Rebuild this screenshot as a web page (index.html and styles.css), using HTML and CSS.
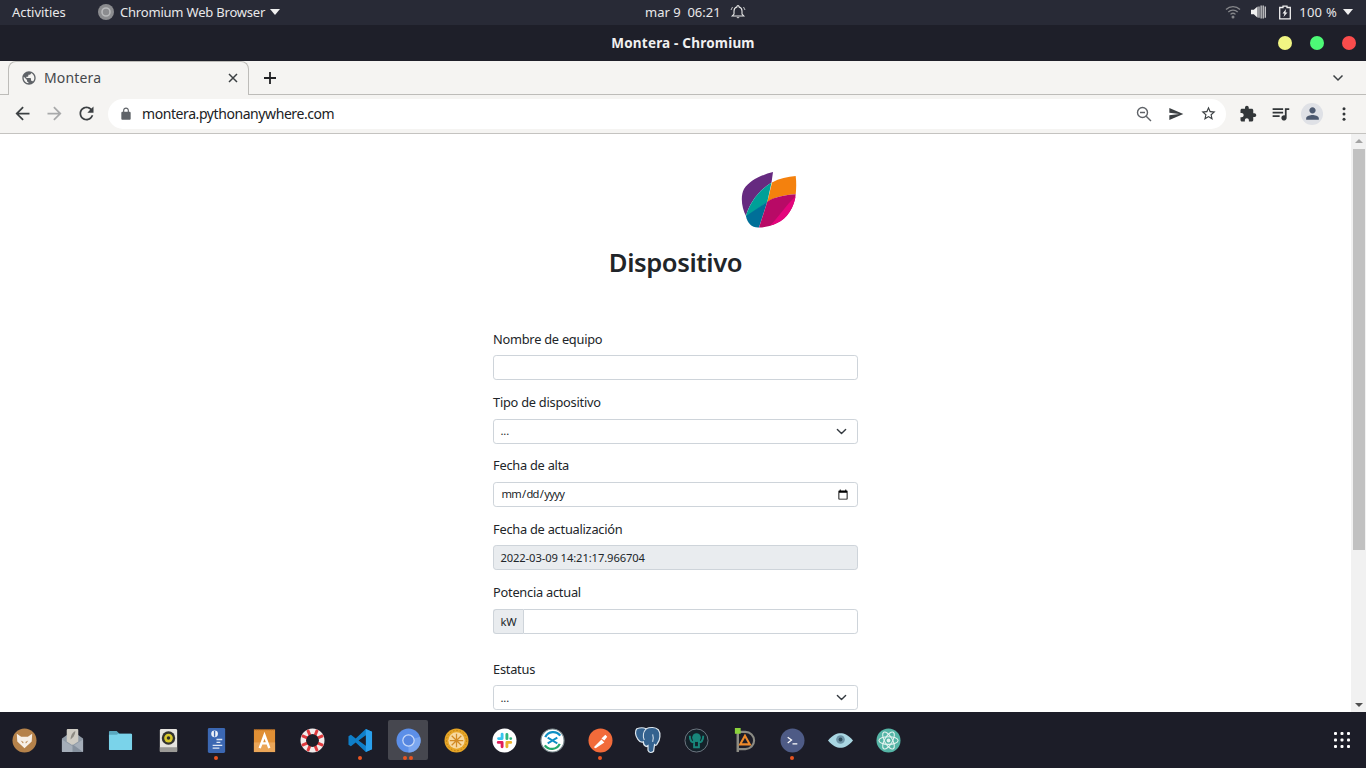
FILE: index.html
```html
<!DOCTYPE html>
<html lang="es">
<head>
<meta charset="utf-8">
<title>Montera - Chromium</title>
<link rel="stylesheet" href="styles.css">
</head>
<body>
<div class="desktop">
  <header class="topbar">
    <div class="tb-left">
      <span class="activities">Activities</span>
      <span class="appmenu">
        <svg class="app-ico" viewBox="0 0 16 16"><circle cx="8" cy="8" r="8" fill="#8b8c8f"/><circle cx="8" cy="8" r="4" fill="none" stroke="#b9babc" stroke-width="1.6"/></svg>
        <span class="appname">Chromium Web Browser</span>
        <i class="caret"></i>
      </span>
    </div>
    <div class="tb-center">
      <span class="clock">mar 9&nbsp;&nbsp;06:21</span>
      <svg class="bell" viewBox="0 0 16 16"><path d="M8 1.5c-.6 0-1 .4-1 1v.4C5 3.500 4 5 4 7v3l-1.800 2h11.600L12 10V7c0-2-1-3.500-3-4.100v-.4c0-.6-.4-1-1-1z" fill="none" stroke="#e8e8e8" stroke-width="1.100"/><path d="M6.500 13.300a1.600 1.600 0 0 0 3 0z" fill="#e8e8e8"/><path d="M2.500 3 1 6M13.500 3 15 6" stroke="#e8e8e8" stroke-width="0.800" fill="none"/></svg>
    </div>
    <div class="tb-right">
      <svg class="sys wifi" viewBox="0 0 16 16"><path d="M1 5.500a10 10 0 0 1 14 0M3.300 8a6.800 6.800 0 0 1 9.400 0M5.500 10.400a3.600 3.600 0 0 1 5 0" fill="none" stroke="#85868a" stroke-width="1.300"/><circle cx="8" cy="13" r="1.500" fill="#85868a"/></svg>
      <svg class="sys vol" viewBox="0 0 16 14"><path d="M0 4.500h3L7 1v12L3 9.500H0z" fill="#f0f0f0"/><path d="M8.500 1v12M10.800 0v14M13 0v14M15.200 1v12" stroke="#e4e4e4" stroke-width="1.200"/></svg>
      <svg class="sys batt" viewBox="0 0 12 14"><path d="M4 .7h4v1.300h3.300v11.300H.7V2H4z" fill="none" stroke="#f0f0f0" stroke-width="1.300"/><path d="M7 3.500 3.500 8h2l-1 3.500L8.500 7h-2z" fill="#f0f0f0"/></svg>
      <span class="pct">100 %</span>
      <i class="caret"></i>
    </div>
  </header>

  <div class="titlebar">
    <span></span>
    <strong class="wintitle">Montera - Chromium</strong>
    <div class="wbtns">
      <i class="wbtn min"></i><i class="wbtn max"></i><i class="wbtn cls"></i>
    </div>
  </div>

  <div class="tabstrip">
    <div class="tab">
      <svg class="fav" viewBox="0 0 24 24"><path d="M12 2C6.480 2 2 6.480 2 12s4.480 10 10 10 10-4.480 10-10S17.520 2 12 2zm-1 17.930c-3.950-.490-7-3.850-7-7.930 0-.620.080-1.210.210-1.790L9 15v1c0 1.100.9 2 2 2v1.930zm6.900-2.540c-.260-.810-1-1.390-1.900-1.390h-1v-3c0-.550-.450-1-1-1H8v-2h2c.550 0 1-.450 1-1V7h2c1.100 0 2-.9 2-2v-.410c2.930 1.190 5 4.060 5 7.410 0 2.080-.8 3.970-2.100 5.390z"/></svg>
      <span class="tabname">Montera</span>
      <svg class="tabx" viewBox="0 0 10 10"><path d="M1 1l8 8M9 1l-8 8" stroke="#3c4043" stroke-width="1.500" fill="none"/></svg>
    </div>
    <svg class="newtab" viewBox="0 0 14 14"><path d="M7 1v12M1 7h12" stroke="#202124" stroke-width="1.800" fill="none"/></svg>
    <svg class="tabdown" viewBox="0 0 12 8"><path d="M1.500 1.500 6 6l4.500-4.500" stroke="#3c4043" stroke-width="1.500" fill="none"/></svg>
  </div>

  <div class="toolbar">
    <span class="tbtn"><svg class="ic nav" viewBox="0 0 24 24"><path d="M20 11H7.830l5.590-5.590L12 4l-8 8 8 8 1.410-1.410L7.830 13H20v-2z"/></svg></span>
    <span class="tbtn off"><svg class="ic nav" viewBox="0 0 24 24"><path d="M12 4l-1.410 1.410L16.170 11H4v2h12.170l-5.580 5.590L12 20l8-8z"/></svg></span>
    <span class="tbtn"><svg class="ic nav" viewBox="0 0 24 24"><path d="M17.650 6.350C16.200 4.900 14.210 4 12 4c-4.420 0-7.990 3.580-7.990 8s3.570 8 7.990 8c3.730 0 6.840-2.550 7.730-6h-2.080c-.820 2.330-3.040 4-5.650 4-3.310 0-6-2.690-6-6s2.690-6 6-6c1.660 0 3.140.690 4.220 1.780L13 11h7V4l-2.350 2.350z"/></svg></span>
    <div class="omni">
      <svg class="lock" viewBox="0 0 24 24"><path d="M18 8h-1V6c0-2.760-2.240-5-5-5S7 3.240 7 6v2H6c-1.100 0-2 .9-2 2v10c0 1.100.9 2 2 2h12c1.100 0 2-.9 2-2V10c0-1.100-.9-2-2-2zM9 6c0-1.660 1.340-3 3-3s3 1.340 3 3v2H9V6z"/></svg>
      <span class="url">montera.pythonanywhere.com</span>
      <span class="tbtn"><svg class="ic s16" viewBox="0 0 16 16"><circle cx="6.500" cy="6.500" r="5" fill="none" stroke="#5f6368" stroke-width="1.400"/><path d="M4 6.500h5M10.200 10.200 15 15" stroke="#5f6368" stroke-width="1.400" fill="none"/></svg></span>
      <span class="tbtn"><svg class="ic send" viewBox="0 0 24 24"><path d="M2.010 21L23 12 2.010 3 2 10l15 2-15 2z" fill="#3c4043"/></svg></span>
      <span class="tbtn"><svg class="ic star" viewBox="0 0 24 24"><path d="M22 9.240l-7.190-.620L12 2 9.190 8.630 2 9.240l5.460 4.730L5.820 21 12 17.270 18.180 21l-1.630-7.030L22 9.240zM12 15.400l-3.760 2.270 1-4.280-3.320-2.880 4.380-.380L12 6.100l1.710 4.040 4.380.380-3.320 2.880 1 4.280L12 15.400z"/></svg></span>
    </div>
    <span class="tbtn"><svg class="ic" viewBox="0 0 24 24"><path d="M20.500 11H19V7c0-1.100-.9-2-2-2h-4V3.500C13 2.120 11.880 1 10.500 1S8 2.120 8 3.500V5H4c-1.100 0-1.990.9-1.990 2v3.800H3.500c1.490 0 2.700 1.210 2.700 2.700s-1.210 2.700-2.700 2.700H2V20c0 1.100.9 2 2 2h3.800v-1.500c0-1.490 1.210-2.700 2.700-2.700 1.490 0 2.700 1.210 2.700 2.700V22H17c1.100 0 2-.9 2-2v-4h1.500c1.380 0 2.500-1.120 2.500-2.500S21.880 11 20.500 11z" fill="#323639"/></svg></span>
    <span class="tbtn"><svg class="ic nav" viewBox="0 0 24 24"><path d="M15 6H3v2h12V6zm0 4H3v2h12v-2zM3 16h8v-2H3v2zM17 6v8.180c-.310-.110-.650-.180-1-.180-1.660 0-3 1.340-3 3s1.340 3 3 3 3-1.340 3-3V8h3V6h-5z" fill="#323639"/></svg></span>
    <span class="tbtn"><span class="avatar"><svg class="ic face" viewBox="0 0 24 24"><path d="M12 12c2.210 0 4-1.790 4-4s-1.790-4-4-4-4 1.790-4 4 1.790 4 4 4zm0 2c-2.670 0-8 1.340-8 4v2h16v-2c0-2.660-5.330-4-8-4z" fill="#4d5a70"/></svg></span></span>
    <span class="tbtn"><svg class="ic" viewBox="0 0 24 24"><circle cx="12" cy="5" r="2" fill="#323639"/><circle cx="12" cy="12" r="2" fill="#323639"/><circle cx="12" cy="19" r="2" fill="#323639"/></svg></span>
  </div>

  <div class="viewport">
    <main class="page">
      <div class="column">
        <svg class="logo" viewBox="0 0 56 57">
          <path d="M32 0C20 3 8 9 3 17-1 25 1 36 5 44 8 32 17 19 30.500 10.500z" fill="#662a80"/>
          <path d="M5 44C8 32 17 19 30.500 10.500L26.300 30 5.500 45z" fill="#00a098"/>
          <path d="M5 44 26.300 29.700 18 55.500C11 56 6 51 5 44z" fill="#006f98"/>
          <path d="M31 10.500C38 6.500 47 4.500 54.700 4 55.500 10 55.300 17 54.700 22.300 44 23 33 25 26.300 30z" fill="#f4810d"/>
          <path d="M26.300 29.700C33 25 44 23 54.700 22.300 54 34 46 47 36 51 30 54 24 55.500 18 55.500z" fill="#b80a66"/>
          <path d="M54.500 24.500C53 35 46 47 36 51 33 52.500 31 53 29 53.500 37 46 45 33 54.500 24.500z" fill="#e4057c"/>
        </svg>
        <h1 class="heading">Dispositivo</h1>
        <form class="device-form">
          <div class="field">
            <label class="flabel" for="f1">Nombre de equipo</label>
            <input class="control" id="f1" type="text">
          </div>
          <div class="field">
            <label class="flabel" for="f2">Tipo de dispositivo</label>
            <div class="selectwrap">
              <select class="control selectbox" id="f2"><option>...</option></select>
              <svg class="chev" viewBox="0 0 16 16"><path d="M2 5l6 6 6-6" fill="none" stroke="#343a40" stroke-width="2" stroke-linecap="round" stroke-linejoin="round"/></svg>
            </div>
          </div>
          <div class="field">
            <label class="flabel" for="f3">Fecha de alta</label>
            <input class="control dateinput" id="f3" type="date">
          </div>
          <div class="field">
            <label class="flabel" for="f4">Fecha de actualización</label>
            <input class="control readonly" id="f4" type="text" value="2022-03-09 14:21:17.966704" readonly>
          </div>
          <div class="field group-field">
            <label class="flabel" for="f5">Potencia actual</label>
            <div class="inputgroup">
              <span class="addon">kW</span>
              <input class="control grouped" id="f5" type="text">
            </div>
          </div>
          <div class="field">
            <label class="flabel" for="f6">Estatus</label>
            <div class="selectwrap">
              <select class="control selectbox" id="f6"><option>...</option></select>
              <svg class="chev" viewBox="0 0 16 16"><path d="M2 5l6 6 6-6" fill="none" stroke="#343a40" stroke-width="2" stroke-linecap="round" stroke-linejoin="round"/></svg>
            </div>
          </div>
        </form>
      </div>
    </main>
    <aside class="scrollbar">
      <i class="arrow up"></i>
      <div class="track"><div class="thumb"></div></div>
      <i class="arrow down"></i>
    </aside>
  </div>

  <footer class="dock">
    <div class="dock-apps">
      <span class="app"><svg class="dicon" viewBox="0 0 26 26"><circle cx="13" cy="13" r="12.500" fill="#b5824a"/><path d="M5 6l4.500 3h7L21 6l-.5 8-7.500 7-7.500-7z" fill="#f6efe6"/><path d="M9 13l3 1.500-.5 1.500zM17 13l-3 1.500.5 1.500z" fill="#b5824a"/></svg></span>
      <span class="app"><svg class="dicon" viewBox="0 0 26 26"><path d="M2 11l11-8 11 8v13a1 1 0 0 1-1 1H3a1 1 0 0 1-1-1z" fill="#8f9aa6"/><path d="M8 1h10a1 1 0 0 1 1 1v12l-6 4-6-4V2a1 1 0 0 1 1-1z" fill="#cfccc4"/><path d="M16 3c-4 2-5 6-5 9l3-3c1-2 2-4 2-6z" fill="#8d8a83"/><path d="M2 12l11 7 11-7v13H2z" fill="#a5aeb9"/><path d="M13 17l11 8H13z" fill="#86919e"/></svg></span>
      <span class="app"><svg class="dicon" viewBox="0 0 26 26"><path d="M1 4a1 1 0 0 1 1-1h7l3 3h12a1 1 0 0 1 1 1v3H1z" fill="#5aa8bf"/><path d="M1 7h8l2-1h13a1 1 0 0 1 1 1v15a1 1 0 0 1-1 1H2a1 1 0 0 1-1-1z" fill="#7ad3ea"/></svg></span>
      <span class="app"><svg class="dicon" viewBox="0 0 26 26"><rect x="4" y="1" width="18" height="24" rx="1.500" fill="#e6e4df"/><rect x="4" y="20" width="18" height="5" fill="#9b9a96"/><circle cx="13" cy="10.500" r="7" fill="#33332f"/><circle cx="13" cy="10.500" r="4.500" fill="#d8c82b"/><circle cx="13" cy="10.500" r="1.800" fill="#2f2f2b"/></svg></span>
      <span class="app dot1"><svg class="dicon" viewBox="0 0 26 26"><rect x="4" y="0" width="18" height="26" rx="1.500" fill="#3b67b2"/><circle cx="11" cy="6" r="3.500" fill="#f0f3f9"/><rect x="10.300" y="3" width="1.400" height="6" fill="#3b67b2"/><path d="M13 12h6M13 15h4M9 18h10M9 21h7" stroke="#dfe7f4" stroke-width="1.400"/></svg></span>
      <span class="app"><svg class="dicon" viewBox="0 0 26 26"><rect x="2" y="1.500" width="22" height="23.500" fill="#e08f35"/><rect x="2" y="15" width="22" height="10" fill="#eba658"/><path d="M2 2h22" stroke="#b5661a" stroke-width="1" stroke-dasharray="1 1"/><path d="M8 21 13 7.500 18 21M9.500 16h7" stroke="#fff" stroke-width="2.500" fill="none"/></svg></span>
      <span class="app"><svg class="dicon" viewBox="0 0 26 26"><circle cx="13" cy="13" r="9.500" fill="none" stroke="#f1ecec" stroke-width="6"/><path d="M8 2l2.500 6M18 2l-2.500 6M8 24l2.500-6M18 24l-2.500-6M2 8l6 2.500M2 18l6-2.500M24 8l-6 2.500M24 18l-6-2.500" stroke="#e03a3e" stroke-width="3" fill="none"/><circle cx="13" cy="13" r="6.500" fill="#1d1e28"/></svg></span>
      <span class="app dot1"><svg class="dicon" viewBox="0 0 26 26"><path d="M18.500 1 25 4v18l-6.500 3L8 15l-5 4-2.500-1.500V8.500L3 7l5 4z" fill="#0f7fc9"/><path d="M18.500 1 25 4v18l-6.500 3z" fill="#2aa0ec"/><path d="M18.500 7.500v11L11 13z" fill="#1d1e28"/></svg></span>
      <span class="app active dot2"><svg class="dicon" viewBox="0 0 26 26"><circle cx="13" cy="13" r="12.500" fill="#5c8fe8"/><path d="M13 13 25 9a12.500 12.500 0 0 1-12 16.500z" fill="#7aa6f0"/><circle cx="13" cy="13" r="6.500" fill="#c7d9f8"/><circle cx="13" cy="13" r="5.200" fill="#5686e0"/></svg></span>
      <span class="app"><svg class="dicon" viewBox="0 0 26 26"><circle cx="13" cy="13" r="12.500" fill="#e6a526"/><circle cx="13" cy="13" r="8.500" fill="#f7d9a0"/><circle cx="13" cy="13" r="10.500" fill="none" stroke="#b97b14" stroke-width="1" stroke-dasharray="1.500 2"/><path d="M13 6v14M6 13h14M8 8l10 10M18 8 8 18" stroke="#d28a24" stroke-width="1.300"/></svg></span>
      <span class="app"><svg class="dicon" viewBox="0 0 26 26"><circle cx="13" cy="13" r="12.500" fill="#fff"/><path d="M10.500 6.500v4.500M6.800 11h3.500" stroke="#36c5f0" stroke-width="3" stroke-linecap="round"/><path d="M15.500 6.800v4.300M19.500 11h0" stroke="#2eb67d" stroke-width="3" stroke-linecap="round"/><path d="M15.500 15h4M15.500 15v4.500" stroke="#ecb22e" stroke-width="3" stroke-linecap="round"/><path d="M6.500 15h4v4.500" stroke="#e01e5a" stroke-width="3" stroke-linecap="round" stroke-linejoin="round" fill="none"/></svg></span>
      <span class="app"><svg class="dicon" viewBox="0 0 26 26"><circle cx="13" cy="13" r="12" fill="#fff" stroke="#7d8c90" stroke-width="1.200"/><path d="M5.500 9.500A9 9 0 0 1 21 8" stroke="#0e8fc4" stroke-width="2.400" fill="none"/><path d="M20.500 16.500A9 9 0 0 1 5 18" stroke="#23a86c" stroke-width="2.400" fill="none"/><path d="M8 10l5 3-5 3M18 10l-5 3 5 3" stroke="#0e8fc4" stroke-width="2" fill="none"/></svg></span>
      <span class="app dot1"><svg class="dicon" viewBox="0 0 26 26"><circle cx="13" cy="13" r="12.500" fill="#f26b3a"/><path d="M6 20l8-8 3 3-9 6zM14 11l4-4 2 2-3 4z" fill="#fff"/></svg></span>
      <span class="app"><svg class="dicon pg" viewBox="0 0 30 30"><path d="M3 3c5-2 8-1 10 0 4-2 10-2 13 1 3 4 2 11-1 15-1 2-2 2-3 1l-1 7c-2 2-5 2-6-1v-5l-2 1c-3-1-3-3-3-5-2 1-4 0-6-3C1 10 1 5 3 3z" fill="#34628f" stroke="#dde6ee" stroke-width="1.300"/><path d="M13 3c-3 3-4 8-2 12M20 9c1 3 1 5 0 8" stroke="#dde6ee" stroke-width="1.100" fill="none"/></svg></span>
      <span class="app"><svg class="dicon" viewBox="0 0 26 26"><circle cx="13" cy="13" r="12" fill="#14222a" stroke="#87909a" stroke-width="0.800"/><circle cx="13" cy="10" r="4.500" fill="#18877b"/><path d="M10.500 13v7h5v-7zM6 8c0 5 2 7 5 7M20 8c0 5-2 7-5 7" stroke="#18877b" stroke-width="2" fill="none"/></svg></span>
      <span class="app"><svg class="dicon" viewBox="0 0 26 26"><path d="M6 4h8a9 9 0 0 1 0 18H6" fill="none" stroke="#8b8b84" stroke-width="2.200"/><path d="M6 2v23" stroke="#8b8b84" stroke-width="2.600"/><rect x="3" y="0" width="6" height="6" fill="#8bd33c"/><path d="M13.500 8l5 9h-10z" fill="none" stroke="#ee8a2a" stroke-width="2.200"/></svg></span>
      <span class="app dot1"><svg class="dicon" viewBox="0 0 26 26"><circle cx="13" cy="13" r="12.500" fill="#4e5b86"/><path d="M8 9.500l4 3-4 3" stroke="#fff" stroke-width="1.300" fill="none"/><path d="M13 16.500h5" stroke="#fff" stroke-width="1.300"/></svg></span>
      <span class="app"><svg class="dicon" viewBox="0 0 26 26"><path d="M0 13C5 7 9 5.500 13 5.500S21 7 26 13c-5 6-9 7.500-13 7.500S5 19 0 13z" fill="#a9d6e2"/><circle cx="13" cy="12" r="4.500" fill="#6d93a6"/><circle cx="13" cy="12" r="2" fill="#31505f"/></svg></span>
      <span class="app"><svg class="dicon" viewBox="0 0 26 26"><circle cx="13" cy="13" r="12.500" fill="#55b5a6"/><g fill="none" stroke="#e4f3f0" stroke-width="1.100"><ellipse cx="13" cy="13" rx="10" ry="4"/><ellipse cx="13" cy="13" rx="10" ry="4" transform="rotate(60 13 13)"/><ellipse cx="13" cy="13" rx="10" ry="4" transform="rotate(120 13 13)"/></g><circle cx="13" cy="13" r="2" fill="#e4f3f0"/></svg></span>
    </div>
    <svg class="grid9" viewBox="0 0 18 18"><g fill="#fff"><rect x="1" y="1" width="3" height="3" rx="1"/><rect x="7.500" y="1" width="3" height="3" rx="1"/><rect x="14" y="1" width="3" height="3" rx="1"/><rect x="1" y="7.500" width="3" height="3" rx="1"/><rect x="7.500" y="7.500" width="3" height="3" rx="1"/><rect x="14" y="7.500" width="3" height="3" rx="1"/><rect x="1" y="14" width="3" height="3" rx="1"/><rect x="7.500" y="14" width="3" height="3" rx="1"/><rect x="14" y="14" width="3" height="3" rx="1"/></g></svg>
  </footer>
</div>
</body>
</html>
```

FILE: styles.css
```css
* { box-sizing: border-box; }
html, body { margin: 0; padding: 0; height: 100%; overflow: hidden; }
body { font-family: "Noto Sans", "Open Sans", sans-serif; color: #212529; background: #fff; }

.desktop { width: 1366px; height: 768px; display: flex; flex-direction: column; overflow: hidden; }

/* GNOME top bar */
.topbar { flex: 0 0 25px; display: grid; grid-template-columns: 645px auto 1fr; align-items: center; padding-bottom: 1px; background: #282a36; color: #e8e8ea; font-size: 13px; }
.tb-left { display: flex; align-items: center; padding-left: 12px; }
.activities { width: 86px; letter-spacing: -.05px; }
.appmenu { display: flex; align-items: center; gap: 6px; }
.appname { letter-spacing: -.2px; }
.app-ico { width: 16px; height: 16px; }
.caret { display: inline-block; width: 0; height: 0; border-left: 5.5px solid transparent; border-right: 5.5px solid transparent; border-top: 6px solid #f0f0f0; margin-left: -1px; }
.tb-center { display: flex; align-items: center; gap: 9px; }
.bell { width: 16px; height: 16px; }
.tb-right { display: flex; align-items: center; justify-content: flex-end; padding-right: 13px; }
.sys { flex: none; }
.wifi { width: 16px; height: 16px; margin-right: 10px; }
.vol { width: 15px; height: 14px; margin-right: 13px; }
.batt { width: 12px; height: 15px; margin-right: 8px; }
.pct { margin-right: 7px; letter-spacing: .25px; }

/* Window title bar */
.titlebar { flex: 0 0 36px; display: grid; grid-template-columns: 1fr auto 1fr; align-items: center; background: #1e1f29; color: #f0f0f0; }
.wintitle { font-size: 13.500px; font-weight: 700; letter-spacing: .2px; }
.wbtns { display: flex; justify-content: flex-end; gap: 18px; padding-right: 10px; }
.wbtn { width: 14px; height: 14px; border-radius: 50%; }
.min { background: #f1f583; }
.max { background: #4dfa76; }
.cls { background: #fb4c4c; }

/* Tabs */
.tabstrip { flex: 0 0 34px; display: flex; align-items: flex-end; padding-left: 8px; background: #f5f4f2; border-bottom: 1px solid #bdbcb9; }
.tab { width: 241px; height: 34px; margin-bottom: -1px; display: flex; align-items: center; padding: 0 10px 2px 12px; background: #f5f4f2; border: 1px solid #bdbcb9; border-bottom: none; border-radius: 8px 8px 0 0; }
.fav { width: 16px; height: 16px; fill: #5f6368; flex: none; }
.tabname { margin-left: 7px; flex: 1; font-size: 14px; letter-spacing: .15px; color: #45484c; }
.tabx { width: 10px; height: 10px; }
.newtab { width: 14px; height: 14px; margin: 0 0 9px 14px; }
.tabdown { width: 12px; height: 8px; margin: 0 22px 12px auto; }

/* Toolbar */
.toolbar { flex: 0 0 39px; display: flex; align-items: center; padding: 0 6px 1px; background: #f5f4f2; border-bottom: 1px solid #c4c3c0; }
.tbtn { flex: 0 0 32px; height: 32px; display: flex; align-items: center; justify-content: center; }
.ic { width: 18px; height: 18px; fill: #3c4043; }
.nav { width: 21px; height: 21px; }
.s16 { width: 16px; height: 16px; }
.send { width: 16px; height: 16px; }
.star { width: 17px; height: 17px; }
.face { width: 19px; height: 19px; }
.off .ic { fill: #a8a9aa; }
.omni { flex: 1; height: 30px; margin: 0 6px; display: flex; align-items: center; padding: 0 2px 0 11px; background: #fff; border-radius: 15px; }
.lock { width: 14px; height: 14px; fill: #5f6368; flex: none; }
.url { flex: 1; margin-left: 9px; font-size: 14px; letter-spacing: -.42px; color: #202124; }
.avatar { width: 22px; height: 22px; border-radius: 50%; background: #dfe1e6; display: flex; align-items: center; justify-content: center; }

/* Page */
.viewport { flex: 1; min-height: 0; display: flex; background: #fff; }
.page { flex: 1; min-width: 0; overflow: hidden; display: flex; justify-content: center; }
.column { width: 365px; display: flex; flex-direction: column; padding-top: 38px; }
.logo { width: 56px; height: 57px; margin-left: 248px; flex: none; }
.heading { margin: 14px 0 0; height: 83px; text-align: center; font-size: 25.600px; line-height: 40px; font-weight: 600; letter-spacing: -.4px; color: #212529; flex: none; }
.device-form { display: flex; flex-direction: column; padding-top: 3.500px; }
.field { margin-bottom: 12.900px; flex: none; }
.group-field { margin-bottom: 25.900px; }
.flabel { display: block; height: 19.200px; margin-bottom: 6.400px; font-size: 12.800px; line-height: 19.200px; letter-spacing: -.24px; }
.control { display: block; width: 100%; height: 25px; padding: 3.200px 6.400px; font-family: inherit; font-size: 11.200px; line-height: 16.800px; letter-spacing: -.1px; color: #212529; background: #fff; border: 1px solid #ced4da; border-radius: 3.200px; outline: none; }
.dateinput { letter-spacing: -.7px; }
.readonly { background: #e9ecef; }
.selectwrap { position: relative; }
.selectbox { appearance: none; -webkit-appearance: none; }
.chev { position: absolute; right: 11px; top: 7px; width: 11px; height: 11px; pointer-events: none; }
.inputgroup { display: flex; }
.addon { flex: none; display: flex; align-items: center; padding: 0 6.400px; height: 25px; font-size: 11.200px; background: #e9ecef; border: 1px solid #ced4da; border-right: none; border-radius: 3.200px 0 0 3.200px; }
.grouped { flex: 1; min-width: 0; border-radius: 0 3.200px 3.200px 0; }

/* Scrollbar */
.scrollbar { flex: 0 0 15px; display: flex; flex-direction: column; align-items: center; background: #f1f1f1; }
.arrow { width: 0; height: 0; border-left: 4px solid transparent; border-right: 4px solid transparent; }
.arrow.up { border-bottom: 4px solid #a3a3a3; margin-top: 5px; flex: 0 0 4px; }
.arrow.down { border-top: 4px solid #505050; margin-bottom: 5px; flex: 0 0 4px; }
.track { flex: 1; width: 100%; padding: 6px 1px 0 2px; }
.thumb { height: 401px; background: #c1c1c1; }

/* Dock */
.dock { flex: 0 0 56px; display: flex; align-items: center; justify-content: space-between; padding-right: 15px; background: #1c1d28; }
.dock-apps { display: flex; }
.app { position: relative; width: 48px; height: 40px; display: flex; align-items: center; justify-content: center; }
.dicon { width: 25px; height: 25px; }
.pg { width: 28px; height: 28px; }
.active { background: #46474f; border-radius: 2px; width: 40px; margin: 0 4px; }
.dot1::after { content: ""; position: absolute; left: 50%; bottom: 0; width: 4px; height: 4px; margin-left: -2px; border-radius: 50%; background: #e95420; }
.dot2::after { content: ""; position: absolute; left: 50%; bottom: 0; width: 4px; height: 4px; margin-left: -5px; border-radius: 50%; background: #e95420; box-shadow: 6px 0 0 #e95420; }
.grid9 { width: 18px; height: 18px; }
```
